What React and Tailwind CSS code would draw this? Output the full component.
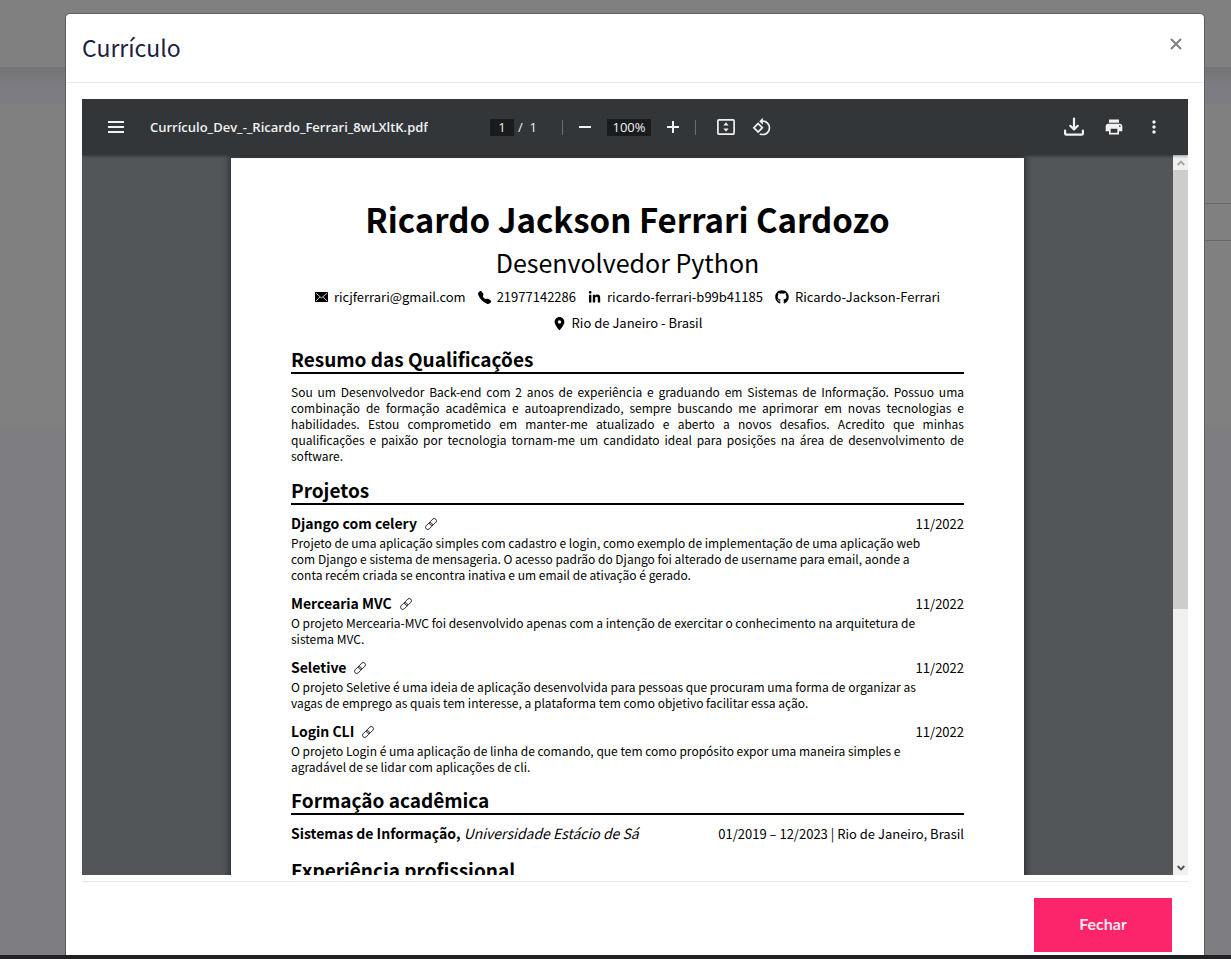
import React from "react";
import { MdPrint, MdRotate90DegreesCcw, MdMoreVert } from "react-icons/md";
import { FaGithub, FaLinkedinIn, FaLocationDot } from "react-icons/fa6";
import { BsTelephoneFill } from "react-icons/bs";

const summary = [
  "Sou um Desenvolvedor Back-end com 2 anos de experiência e graduando em Sistemas de Informação. Possuo uma",
  "combinação de formação acadêmica e autoaprendizado, sempre buscando me aprimorar em novas tecnologias e",
  "habilidades. Estou comprometido em manter-me atualizado e aberto a novos desafios. Acredito que minhas",
  "qualificações e paixão por tecnologia tornam-me um candidato ideal para posições na área de desenvolvimento de",
];

const projects = [
  {
    title: "Django com celery",
    date: "11/2022",
    lines: [
      "Projeto de uma aplicação simples com cadastro e login, como exemplo de implementação de uma aplicação web",
      "com Django e sistema de mensageria. O acesso padrão do Django foi alterado de username para email, aonde a",
      "conta recém criada se encontra inativa e um email de ativação é gerado.",
    ],
  },
  {
    title: "Mercearia MVC",
    date: "11/2022",
    lines: [
      "O projeto Mercearia-MVC foi desenvolvido apenas com a intenção de exercitar o conhecimento na arquitetura de",
      "sistema MVC.",
    ],
  },
  {
    title: "Seletive",
    date: "11/2022",
    lines: [
      "O projeto Seletive é uma ideia de aplicação desenvolvida para pessoas que procuram uma forma de organizar as",
      "vagas de emprego as quais tem interesse, a plataforma tem como objetivo facilitar essa ação.",
    ],
  },
  {
    title: "Login CLI",
    date: "11/2022",
    lines: [
      "O projeto Login é uma aplicação de linha de comando, que tem como propósito expor uma maneira simples e",
      "agradável de se lidar com aplicações de cli.",
    ],
  },
];

function EnvelopeIcon() {
  return (
    <svg viewBox="0 0 13 10" className="h-[10px] w-[13px]" aria-hidden="true">
      <rect width="13" height="10" rx="0.6" fill="#000" />
      <path d="M1 1.2 6.5 6 12 1.2M1 9l3.8-4M12 9 8.2 5" fill="none" stroke="#fff" strokeWidth="0.8" />
    </svg>
  );
}

function LinkIcon() {
  return (
    <svg viewBox="0 0 12 12" className="size-3" fill="none" stroke="#000" strokeWidth="0.8" aria-hidden="true">
      <g transform="rotate(-45 6 6)">
        <rect x="-0.8" y="3.8" width="7.8" height="4.4" rx="2.2" />
        <rect x="5" y="3.8" width="7.8" height="4.4" rx="2.2" />
      </g>
    </svg>
  );
}

function FitPageIcon() {
  return (
    <svg viewBox="0 0 20 16" className="h-4 w-5" aria-hidden="true">
      <rect x="1.9" y="0.9" width="16.2" height="14.2" rx="1" fill="none" stroke="#f1f1f1" strokeWidth="1.7" />
      <path d="M10 3.2 12.6 6.4H7.4zM10 12.8 12.6 9.6H7.4z" fill="#f1f1f1" />
    </svg>
  );
}

function DownloadIcon() {
  return (
    <svg viewBox="0 0 20 20" className="size-5" fill="none" stroke="#f1f1f1" strokeWidth="2.2" strokeLinecap="round" strokeLinejoin="round" aria-hidden="true">
      <path d="M1.1 13.5v3q0 1.2 1.2 1.2h15.4q1.2 0 1.2-1.2v-3M10 1.6v10.6M6.2 8.8 10 12.4l3.8-3.6" />
    </svg>
  );
}

function ToolButton({ label, className = "", children }) {
  return (
    <button type="button" aria-label={label} className={"flex h-9 items-center justify-center text-[#f1f1f1] " + className}>
      {children}
    </button>
  );
}

function Toolbar() {
  return (
    <div className="relative z-10 grid h-14 shrink-0 grid-cols-[1fr_auto_1fr] items-center bg-[#323639] font-['Open_Sans','Noto_Sans',sans-serif] text-[13px] text-[#f1f1f1] shadow-[0_1px_3px_rgba(0,0,0,0.4)]">
      <div className="flex min-w-0 items-center pl-4">
        <ToolButton label="Menu" className="w-9">
          <svg viewBox="0 0 16 12" className="h-3 w-4" fill="#f1f1f1" aria-hidden="true">
            <path d="M0 0h16v2H0zM0 5h16v2H0zM0 10h16v2H0z" />
          </svg>
        </ToolButton>
        <span className="truncate pt-0.5 pl-4 font-semibold">Currículo_Dev_-_Ricardo_Ferrari_8wLXltK.pdf</span>
      </div>
      <div className="flex items-center">
        <input aria-label="Página" defaultValue="1" className="h-[17px] w-6 bg-[#191b1c] pt-0.5 text-center" />
        <span className="w-12 pt-0.5 pl-1 whitespace-pre">/  1</span>
        <span className="h-[15px] w-px bg-[#6b6e70]" />
        <ToolButton label="Diminuir zoom" className="ml-1 w-9">
          <svg viewBox="0 0 12 12" className="size-3" aria-hidden="true">
            <path d="M0 5h12v2H0z" fill="#f1f1f1" />
          </svg>
        </ToolButton>
        <input aria-label="Zoom" defaultValue="100%" className="mx-1 h-[17px] w-11 bg-[#191b1c] pt-0.5 text-center" />
        <ToolButton label="Aumentar zoom" className="mr-1 w-9">
          <svg viewBox="0 0 12 12" className="size-3" aria-hidden="true">
            <path d="M0 5h5V0h2v5h5v2H7v5H5V7H0z" fill="#f1f1f1" />
          </svg>
        </ToolButton>
        <span className="mr-3 h-[15px] w-px bg-[#6b6e70]" />
        <ToolButton label="Ajustar à página" className="w-9">
          <FitPageIcon />
        </ToolButton>
        <ToolButton label="Girar" className="w-9">
          <MdRotate90DegreesCcw className="size-5" />
        </ToolButton>
      </div>
      <div className="flex justify-end pr-3.5">
        <ToolButton label="Baixar" className="w-10">
          <DownloadIcon />
        </ToolButton>
        <ToolButton label="Imprimir" className="w-10">
          <MdPrint className="size-5" />
        </ToolButton>
        <ToolButton label="Mais ações" className="w-10">
          <MdMoreVert className="size-5" />
        </ToolButton>
      </div>
    </div>
  );
}

function Section({ title, children }) {
  return (
    <section className="mt-3.5">
      <h3 className="border-b-2 border-black pb-0.5 text-[19px] leading-[22px] font-bold">{title}</h3>
      {children}
    </section>
  );
}

function Contact({ icon, children }) {
  return (
    <span className="flex items-center gap-1.5">
      {icon}
      <span>{children}</span>
    </span>
  );
}

function Resume() {
  return (
    <article className="mx-auto mt-[3px] w-[793px] max-w-full bg-white px-15 pt-[37px] pb-15 font-['Noto_Sans_CJK_SC','Noto_Sans',sans-serif] text-[13px] leading-4 text-black shadow-[0_0_6px_2px_rgba(0,0,0,0.45)]">
      <h1 className="text-center text-[33px] leading-12 font-bold">Ricardo Jackson Ferrari Cardozo</h1>
      <p className="mt-[3px] text-center text-[25px] leading-8">Desenvolvedor Python</p>
      <div className="mt-[9px] mb-[15px] flex flex-wrap justify-center gap-x-3 gap-y-1.5 leading-5">
        <Contact icon={<EnvelopeIcon />}>ricjferrari@gmail.com</Contact>
        <Contact icon={<BsTelephoneFill className="size-[13px]" />}>21977142286</Contact>
        <Contact icon={<FaLinkedinIn className="size-[13px]" />}>ricardo-ferrari-b99b41185</Contact>
        <Contact icon={<FaGithub className="size-3.5" />}>Ricardo-Jackson-Ferrari</Contact>
        <Contact icon={<FaLocationDot className="size-[13px]" />}>Rio de Janeiro - Brasil</Contact>
      </div>

      <Section title="Resumo das Qualificações">
        <p className="mt-2.5 mb-[15px] text-[12px]">
          {summary.map((line) => (
            <span key={line} className="block text-justify [text-align-last:justify]">
              {line}{" "}
            </span>
          ))}
          software.
        </p>
      </Section>

      <Section title="Projetos">
        <div className="mt-[7px] flex flex-col gap-[9px]">
          {projects.map((p) => (
            <div key={p.title}>
              <div className="flex items-center justify-between leading-[23px]">
                <a href="#" className="flex items-center gap-2">
                  <h4 className="text-[14px] font-bold">{p.title}</h4>
                  <LinkIcon />
                </a>
                <span>{p.date}</span>
              </div>
              <p className="text-[12px]">
                {p.lines.map((line) => (
                  <span key={line} className="block">
                    {line}{" "}
                  </span>
                ))}
              </p>
            </div>
          ))}
        </div>
      </Section>

      <Section title="Formação acadêmica">
        <div className="mt-[7px] flex items-center justify-between leading-[23px]">
          <span className="text-[14px]">
            <b>Sistemas de Informação,</b> <i>Universidade Estácio de Sá</i>
          </span>
          <span>01/2019 – 12/2023 | Rio de Janeiro, Brasil</span>
        </div>
      </Section>

      <Section title="Experiência profissional" />
    </article>
  );
}

function Scrollbar() {
  return (
    <div className="flex w-[15px] shrink-0 flex-col bg-[#f0f0f0]" aria-hidden="true">
      <div className="flex h-[15px] items-center justify-center">
        <svg viewBox="0 0 8 6" className="h-1.5 w-2" fill="none" stroke="#a3a3a3" strokeWidth="1.8">
          <path d="M0.7 5 4 1.6 7.3 5" />
        </svg>
      </div>
      <div className="h-[439px] bg-[#cdcdcd]" />
      <div className="mt-auto flex h-[15px] items-center justify-center">
        <svg viewBox="0 0 8 6" className="h-1.5 w-2" fill="none" stroke="#505050" strokeWidth="1.8">
          <path d="M0.7 1 4 4.4 7.3 1" />
        </svg>
      </div>
    </div>
  );
}

function Backdrop() {
  return (
    <div className="absolute inset-0 -z-10 flex flex-col bg-[#7e7d82]" aria-hidden="true">
      <div className="h-[67px] bg-[#808080]" />
      <div className="h-[37px] bg-linear-to-b from-[#737277] to-[#7d7c82] to-50%" />
      <div className="h-[323px] bg-[#808080] pt-[99px]">
        <div className="ml-auto h-[38px] w-1/2 border-y border-[#686868]" />
      </div>
    </div>
  );
}

export default function App() {
  return (
    <div className="relative isolate flex h-screen flex-col overflow-hidden pt-[13px]">
      <Backdrop />
      <div role="dialog" aria-labelledby="dialog-title" className="mr-[26px] ml-[65px] flex min-h-0 flex-1 flex-col rounded-t-[5px] border border-b-0 border-[#5e5e5e] bg-white">
        <header className="flex h-[69px] shrink-0 items-start justify-between border-b border-[#e9ecef] px-4">
          <h2 id="dialog-title" className="pt-[15px] font-['Noto_Sans_CJK_SC','Noto_Sans',sans-serif] text-[23px] leading-9 text-[#1b2141]">
            Currículo
          </h2>
          <button type="button" aria-label="Fechar janela" className="mt-[18px] flex size-6 items-center justify-center">
            <svg viewBox="0 0 12 12" className="size-3" stroke="#7f7f7f" strokeWidth="1.9" aria-hidden="true">
              <path d="m1 1 10 10M11 1 1 11" />
            </svg>
          </button>
        </header>
        <main className="flex min-h-0 flex-1 flex-col px-4 pt-4">
          <div className="flex min-h-0 flex-1 flex-col overflow-hidden bg-[#525659]">
            <Toolbar />
            <div className="flex min-h-0 flex-1">
              <div className="min-w-0 flex-1 overflow-hidden">
                <Resume />
              </div>
              <Scrollbar />
            </div>
          </div>
          <footer className="mt-1.5 flex shrink-0 justify-end border-t border-[#e5e7ea] px-4 pt-4 pb-[3px]">
            <button type="button" className="h-[54px] w-[138px] bg-[#fc256b] pb-0.5 font-['Lato',sans-serif] text-[16px] font-bold text-[#ffe3ee]">
              Fechar
            </button>
          </footer>
        </main>
      </div>
      <div className="h-1 shrink-0 bg-[#1f2024]" />
    </div>
  );
}
